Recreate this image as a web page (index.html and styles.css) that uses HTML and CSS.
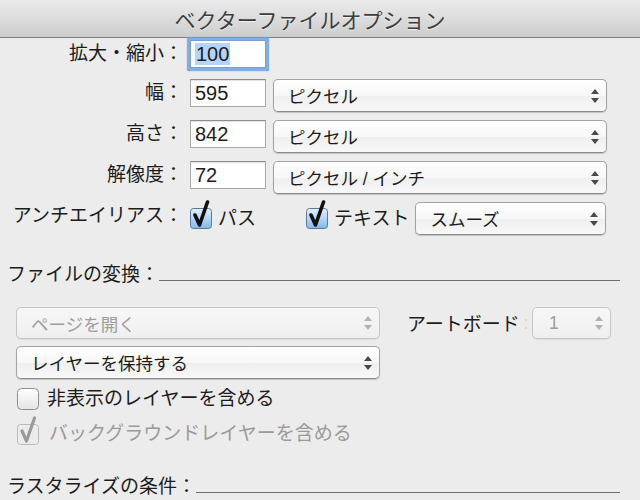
FILE: index.html
```html
<!DOCTYPE html>
<html lang="ja">
<head>
    <meta charset="UTF-8">
    <title>ベクターファイルオプション</title>
    <link rel="stylesheet" href="styles.css">
</head>
<body>
    <div class="title-bar">ベクターファイルオプション</div>

    <div class="size-grid">
        <div class="label first">拡大・縮小：</div>
        <div class="field focused first"><span class="selection">100</span></div>
        <div></div>

        <div class="label">幅：</div>
        <div class="field">595</div>
        <div class="popup"><span>ピクセル</span>
            <svg class="arrows" width="8" height="14" viewBox="0 0 8 14"><polygon points="4,0 8,5 0,5"/><polygon points="0,9 8,9 4,14"/></svg>
        </div>

        <div class="label">高さ：</div>
        <div class="field">842</div>
        <div class="popup"><span>ピクセル</span>
            <svg class="arrows" width="8" height="14" viewBox="0 0 8 14"><polygon points="4,0 8,5 0,5"/><polygon points="0,9 8,9 4,14"/></svg>
        </div>

        <div class="label">解像度：</div>
        <div class="field">72</div>
        <div class="popup"><span>ピクセル / インチ</span>
            <svg class="arrows" width="8" height="14" viewBox="0 0 8 14"><polygon points="4,0 8,5 0,5"/><polygon points="0,9 8,9 4,14"/></svg>
        </div>

        <div class="label">アンチエイリアス：</div>
        <div class="aa-options">
            <svg class="check big" width="24" height="32" viewBox="0 0 24 32">
                <defs>
                    <linearGradient id="blueBox" x1="0" y1="0" x2="0" y2="1">
                        <stop offset="0" stop-color="#e4f1fd"/>
                        <stop offset="0.5" stop-color="#b3d6f6"/>
                        <stop offset="1" stop-color="#7fb8ec"/>
                    </linearGradient>
                    <linearGradient id="greyBox" x1="0" y1="0" x2="0" y2="1">
                        <stop offset="0" stop-color="#ffffff"/>
                        <stop offset="1" stop-color="#e4e4e4"/>
                    </linearGradient>
                </defs>
                <rect x="0.5" y="8.5" width="21" height="20" rx="3" fill="url(#blueBox)" stroke="#5d7898"/>
                <path d="M5 15 L9.5 25 L17.5 2" fill="none" stroke="#111" stroke-width="3.6" stroke-linecap="round" stroke-linejoin="round"/>
            </svg>
            <span class="aa-text">パス</span>
            <svg class="check big second" width="24" height="32" viewBox="0 0 24 32">
                <rect x="0.5" y="8.5" width="21" height="20" rx="3" fill="url(#blueBox)" stroke="#5d7898"/>
                <path d="M5 15 L9.5 25 L17.5 2" fill="none" stroke="#111" stroke-width="3.6" stroke-linecap="round" stroke-linejoin="round"/>
            </svg>
            <span class="aa-text">テキスト</span>
            <div class="popup smooth"><span>スムーズ</span>
                <svg class="arrows" width="8" height="14" viewBox="0 0 8 14"><polygon points="4,0 8,5 0,5"/><polygon points="0,9 8,9 4,14"/></svg>
            </div>
        </div>
    </div>

    <div class="section-head convert"><span>ファイルの変換：</span><span class="rule"></span></div>

    <div class="page-row">
        <div class="popup disabled wide"><span>ページを開く</span>
            <svg class="arrows" width="8" height="14" viewBox="0 0 8 14"><polygon points="4,0 8,5 0,5"/><polygon points="0,9 8,9 4,14"/></svg>
        </div>
        <span class="artboard-label">アートボード</span><span class="faint-colon">:</span>
        <div class="popup disabled artboard"><span>1</span>
            <svg class="arrows" width="8" height="14" viewBox="0 0 8 14"><polygon points="4,0 8,5 0,5"/><polygon points="0,9 8,9 4,14"/></svg>
        </div>
    </div>

    <div class="layer-row">
        <div class="popup wide"><span>レイヤーを保持する</span>
            <svg class="arrows" width="8" height="14" viewBox="0 0 8 14"><polygon points="4,0 8,5 0,5"/><polygon points="0,9 8,9 4,14"/></svg>
        </div>
    </div>

    <div class="check-row hidden-layers">
        <svg width="22" height="22" viewBox="0 0 22 22">
            <rect x="0.5" y="0.5" width="21" height="21" rx="4" fill="url(#greyBox)" stroke="#8e8e8e"/>
        </svg>
        <span>非表示のレイヤーを含める</span>
    </div>

    <div class="check-row background disabled-text">
        <svg width="24" height="32" viewBox="0 0 24 32">
            <rect x="0.5" y="8.5" width="21" height="20" rx="3" fill="#ececec" stroke="#b9b9b9"/>
            <path d="M5 15 L9.5 25 L17.5 2" fill="none" stroke="#9a9a9a" stroke-width="3.2" stroke-linecap="round" stroke-linejoin="round"/>
        </svg>
        <span>バックグラウンドレイヤーを含める</span>
    </div>

    <div class="section-head raster"><span>ラスタライズの条件：</span><span class="rule"></span></div>
</body>
</html>
```

FILE: styles.css
```css
* {
    margin: 0;
    padding: 0;
    box-sizing: border-box;
}

body {
    width: 640px;
    height: 500px;
    overflow: hidden;
    background-color: #ececec;
    font-family: "Liberation Sans", "Noto Sans CJK JP", sans-serif;
    font-size: 19px;
    color: #1c1c1c;
}

.title-bar {
    height: 38px;
    display: flex;
    align-items: center;
    justify-content: center;
    padding-right: 20px;
    background: linear-gradient(#ebebeb, #cdcdcd);
    border-bottom: 1px solid #7e7e7e;
    font-size: 21px;
    color: #3d3d3d;
    text-shadow: 0 1px 0 rgba(255, 255, 255, 0.6);
}

/* 上部のサイズ設定 */
.size-grid {
    display: grid;
    grid-template-columns: 183px 76px 334px;
    grid-auto-rows: 33px;
    column-gap: 7px;
    row-gap: 8px;
    align-items: start;
}

.label {
    text-align: right;
    white-space: nowrap;
    line-height: 28px;
}

.first {
    margin-top: 2px;
}

.field {
    width: 76px;
    height: 28px;
    padding-left: 4px;
    background-color: #fff;
    border: 1px solid #a8a8a8;
    border-top-color: #8d8d8d;
    box-shadow: inset 0 1px 1px rgba(0, 0, 0, 0.12);
    font-size: 20px;
    line-height: 26px;
}

.field.focused {
    box-shadow: 0 0 1px 3px rgba(104, 160, 224, 0.8);
    border-color: #7a9fcc;
}

.selection {
    background-color: #b4d4f8;
    padding: 0 1px;
}

.popup {
    height: 33px;
    display: flex;
    align-items: center;
    justify-content: space-between;
    padding: 0 7px 0 14px;
    border: 1px solid #a3a3a3;
    border-bottom-color: #8b8b8b;
    border-radius: 5px;
    background: linear-gradient(#ffffff, #f7f7f7 50%, #efefef 52%, #f8f8f8);
    box-shadow: 0 1px 1px rgba(0, 0, 0, 0.18);
    font-size: 17.5px;
    white-space: nowrap;
}

.arrows {
    fill: #484848;
    flex-shrink: 0;
}

.popup.disabled {
    height: 32px;
    color: #9d9d9d;
    border-color: #c6c6c6;
    background: linear-gradient(#f7f7f7, #efefef);
    box-shadow: 0 1px 0 rgba(0, 0, 0, 0.06);
}

.popup.disabled .arrows {
    fill: #b2b2b2;
}

.aa-options {
    grid-column: 2 / 4;
    display: flex;
    align-items: flex-start;
}

.check.big {
    margin-top: -2px;
}

.check.second {
    margin-left: 50px;
}

.aa-text {
    margin-left: 4px;
    line-height: 33px;
}

.popup.smooth {
    width: 191px;
    margin-left: 6px;
}

/* セクション見出し */
.section-head {
    display: flex;
    align-items: baseline;
    padding-left: 7px;
    margin-right: 20px;
    line-height: 24px;
    white-space: nowrap;
}

.rule {
    flex: 1;
    height: 0;
    border-bottom: 1px solid #6e6e6e;
}

.section-head.convert {
    margin-top: 28px;
}

.section-head.raster {
    margin-top: 27px;
}

.page-row {
    display: flex;
    align-items: center;
    margin-top: 20px;
    padding-left: 16px;
}

.popup.wide {
    width: 364px;
}

.artboard-label {
    margin-left: 27px;
    margin-top: -1px;
}

.faint-colon {
    width: 12px;
    text-align: center;
    color: #e0d6b4;
}

.popup.artboard {
    width: 79px;
    padding-left: 16px;
}

.layer-row {
    margin-top: 7px;
    padding-left: 16px;
}

.check-row {
    display: flex;
    align-items: flex-start;
    gap: 8px;
    padding-left: 17px;
}

.check-row.hidden-layers {
    margin-top: 9px;
    line-height: 22px;
}

.check-row.background {
    margin-top: 6px;
}

.check-row.background span {
    margin-top: 6px;
    line-height: 24px;
}

.disabled-text {
    color: #9a9a9a;
}
```
